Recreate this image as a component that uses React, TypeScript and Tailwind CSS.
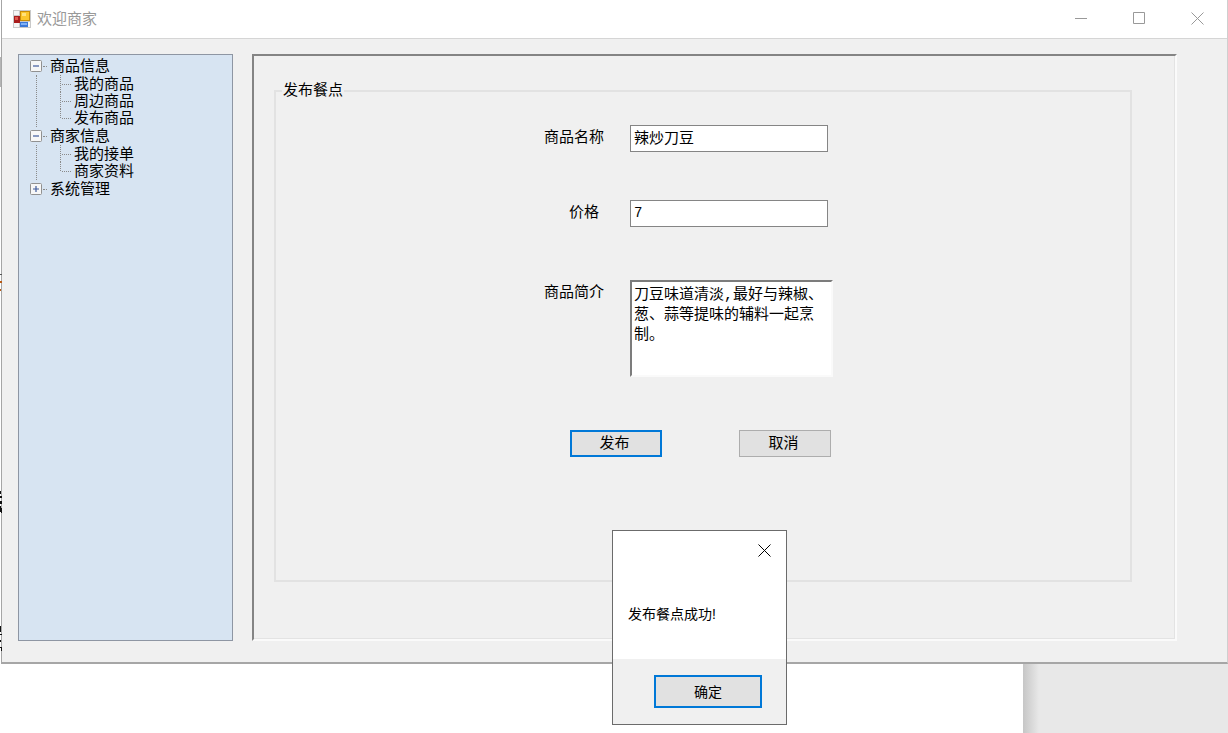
import React, { useState } from 'react';

interface TreeGroup {
    label: string;
    open: boolean;
    items: string[];
}

const initialTree: TreeGroup[] = [
    { label: '商品信息', open: true, items: ['我的商品', '周边商品', '发布商品'] },
    { label: '商家信息', open: true, items: ['我的接单', '商家资料'] },
    { label: '系统管理', open: false, items: [] },
];

const AppIcon = () => (
    <svg width="18" height="18" viewBox="0 0 18 18" aria-hidden="true">
        <rect x="0" y="0" width="18" height="18" fill="#c9c9c9" />
        <rect x="1" y="1" width="5" height="4" fill="#f5f5f5" />
        <rect x="1" y="13" width="5" height="4" fill="#f5f5f5" />
        <rect x="15" y="12" width="2" height="5" fill="#f5f5f5" />
        <rect x="1" y="6" width="6" height="7" fill="#a81c1c" />
        <rect x="2" y="7" width="3" height="3" fill="#e0574d" />
        <rect x="7" y="1" width="10" height="10" fill="#c98d08" />
        <rect x="8" y="2" width="8" height="8" fill="#fbc62c" />
        <rect x="9" y="3" width="4" height="3" fill="#ffe27c" />
        <rect x="7" y="12" width="8" height="5" fill="#3b78d8" />
        <rect x="8" y="13" width="6" height="2" fill="#7fb0f5" />
    </svg>
);

const Cross = () => (
    <svg width="13" height="13" viewBox="0 0 13 13" fill="none" stroke="currentColor" aria-hidden="true">
        <path d="M.5 .5l12 12M12.5 .5l-12 12" />
    </svg>
);

const Toggle = ({ open }: { open: boolean }) => (
    <svg width="12" height="12" viewBox="0 0 12 12" aria-hidden="true">
        <rect x=".5" y=".5" width="11" height="11" rx="1" fill="#f7f7f7" stroke="#919191" />
        <path d={open ? 'M3 6h6' : 'M3 6h6M6 3v6'} stroke="#3f5a9c" strokeWidth="1.2" />
    </svg>
);

// dotted elbow in front of a child node
const Branch = ({ last }: { last: boolean }) => (
    <svg width="13" height="17" viewBox="0 0 13 17" stroke="#8a8a8a" strokeDasharray="1 1" aria-hidden="true">
        <path d={last ? 'M.5 0v9' : 'M.5 0v17'} />
        <path d="M2 9.5h9" />
    </svg>
);

// edge of the page behind the window
const BackdropEdge = () => (
    <svg className="absolute left-0 top-0" width="2" height="664" viewBox="0 0 2 664" aria-hidden="true">
        <path d="M0 57h1v30H0z" fill="#b5b5b5" />
        <path d="M0 274h2v1H0z" fill="#555" />
        <path d="M0 281h2v2H0zM0 289h1v2H0z" fill="#b85a14" />
        <path d="M0 491h1v3H0zM0 496h2v2H0zM0 501h2v3H0zM0 506h1v6H0zM1 508h1v5H1z" fill="#111" />
        <path d="M0 626h1v6H0zM0 634h2v1H0zM0 640h1v2H0zM0 647h2v1H0zM1 648h1v3H1z" fill="#111" />
    </svg>
);

const Sidebar: React.FC = () => {
    const [tree, setTree] = useState(initialTree);

    const toggle = (label: string) => {
        setTree(tree.map(g => (g.label === label ? { ...g, open: !g.open } : g)));
    };

    return (
        <nav className="w-[215px] shrink-0 border border-[#8e96a3] bg-[#d7e4f2] pl-[11px] pt-[2px]">
            <ul>
                {tree.map(group => (
                    <li key={group.label}>
                        <div className="flex h-[18px] items-center">
                            <button type="button" aria-label={group.label} aria-expanded={group.open} onClick={() => toggle(group.label)}>
                                <Toggle open={group.open} />
                            </button>
                            <span className="ml-px mr-[3px] w-1 border-t border-dotted border-[#8a8a8a]" />
                            <span>{group.label}</span>
                        </div>
                        {group.open && (
                            <ul className="ml-[6px] border-l border-dotted border-[#8a8a8a] pb-px pl-[23px]">
                                {group.items.map((item, n) => (
                                    <li key={item} className="flex h-[17px] items-center">
                                        <Branch last={n === group.items.length - 1} />
                                        <a href="#" className="ml-px">{item}</a>
                                    </li>
                                ))}
                            </ul>
                        )}
                    </li>
                ))}
            </ul>
        </nav>
    );
};

const App: React.FC = () => {
    const [name, setName] = useState('辣炒刀豆');
    const [price, setPrice] = useState('7');
    const [intro, setIntro] = useState('刀豆味道清淡,最好与辣椒、葱、蒜等提味的辅料一起烹制。');
    const [showDialog, setShowDialog] = useState(true);

    const handleSubmit = (e: React.FormEvent) => {
        e.preventDefault();
        setShowDialog(true);
    };

    return (
        <div className="relative flex min-h-screen flex-col bg-white font-['Liberation_Sans','Noto_Sans_CJK_SC',sans-serif] text-[15px] leading-[18px] text-black">
            <div className="ml-px flex flex-col border-b-2 border-l border-r border-b-[#a6a6a6] border-l-[#a6a6a6] border-r-[#cfcfcf] bg-[#f0f0f0]">
                <header className="flex h-[39px] items-center border-b border-[#d5d5d5] bg-white pb-px pl-[11px] pr-[23px] text-[#999]">
                    <AppIcon />
                    <h1 className="ml-[6px] flex-1">欢迎商家</h1>
                    <div className="flex gap-[46px]">
                        <button type="button" aria-label="最小化">
                            <svg width="12" height="13" viewBox="0 0 12 13" stroke="currentColor"><path d="M0 6.5h12" /></svg>
                        </button>
                        <button type="button" aria-label="最大化">
                            <svg width="12" height="13" viewBox="0 0 12 13" fill="none" stroke="currentColor"><path d="M.5 .5h11v11H.5z" /></svg>
                        </button>
                        <button type="button" aria-label="关闭"><Cross /></button>
                    </div>
                </header>

                <div className="flex gap-[19px] pb-[21px] pl-4 pr-[50px] pt-[15px]">
                    <Sidebar />

                    <main className="flex-1 border-2 border-b-[#fafafa] border-l-[#848484] border-r-[#fafafa] border-t-[#848484]">
                        <div className="border-b border-r border-[#e3e3e3] pb-14 pl-5 pr-[42px] pt-[25px]">
                            <form onSubmit={handleSubmit}>
                                <fieldset className="min-h-[501px] border-2 border-[#e2e2e2]">
                                    <legend className="ml-[6px] px-px pb-[2px]">发布餐点</legend>
                                    <div className="flex flex-col pl-[268px] pt-6">
                                        <div className="mb-12 flex gap-[26px]">
                                            <label htmlFor="name" className="w-[60px] pt-[3px]">商品名称</label>
                                            <input
                                                id="name"
                                                className="h-[27px] w-[198px] border border-[#858585] bg-white px-[3px] pb-1 outline-none"
                                                value={name}
                                                onChange={e => setName(e.target.value)}
                                            />
                                        </div>
                                        <div className="mb-[53px] flex gap-[26px]">
                                            <label htmlFor="price" className="w-[60px] pr-[5px] pt-[3px] text-right">价格</label>
                                            <input
                                                id="price"
                                                className="h-[27px] w-[198px] border border-[#858585] bg-white px-[3px] pb-[2px] font-['Liberation_Mono',monospace] text-sm outline-none"
                                                value={price}
                                                onChange={e => setPrice(e.target.value)}
                                            />
                                        </div>
                                        <div className="mb-[53px] flex gap-[26px]">
                                            <label htmlFor="intro" className="w-[60px] pt-[3px]">商品简介</label>
                                            <textarea
                                                id="intro"
                                                className="h-[97px] w-[203px] resize-none border-2 border-b-[#fafafa] border-l-[#7c7c7c] border-r-[#fafafa] border-t-[#7c7c7c] bg-white px-[2px] py-1 font-['Liberation_Mono','Noto_Sans_CJK_SC',monospace] leading-5 outline-none"
                                                value={intro}
                                                onChange={e => setIntro(e.target.value)}
                                            />
                                        </div>
                                        <div className="flex gap-[77px] pl-[26px]">
                                            <button type="submit" className="h-[27px] w-[92px] border-2 border-[#0078d7] bg-[#e1e1e1] pb-px pr-[3px]">发布</button>
                                            <button type="button" className="h-[27px] w-[92px] border border-[#adadad] bg-[#e1e1e1] pb-px pr-[3px]">取消</button>
                                        </div>
                                    </div>
                                </fieldset>
                            </form>
                        </div>
                    </main>
                </div>
            </div>

            <div className="flex flex-1 justify-end">
                <div className="w-[205px] bg-[#e8e8e8]">
                    <div className="h-full w-4 bg-linear-to-r from-[#c6c6c6] to-[#e8e8e8]" />
                </div>
            </div>

            <BackdropEdge />

            {showDialog && (
                <div role="dialog" aria-label="发布餐点" className="absolute left-[612px] top-[530px] w-[175px] border border-[#6b6b6b] bg-white text-sm">
                    <div className="flex justify-end pr-[15px] pt-[13px]">
                        <button type="button" aria-label="关闭" onClick={() => setShowDialog(false)}><Cross /></button>
                    </div>
                    <p className="px-[15px] pb-[35px] pt-[47px]">发布餐点成功!</p>
                    <div className="flex justify-end bg-[#f0f0f0] pb-4 pr-6 pt-4">
                        <button type="button" className="h-[33px] w-[108px] border-2 border-[#0078d7] bg-[#e1e1e1]" onClick={() => setShowDialog(false)}>确定</button>
                    </div>
                </div>
            )}
        </div>
    );
};

export default App;
